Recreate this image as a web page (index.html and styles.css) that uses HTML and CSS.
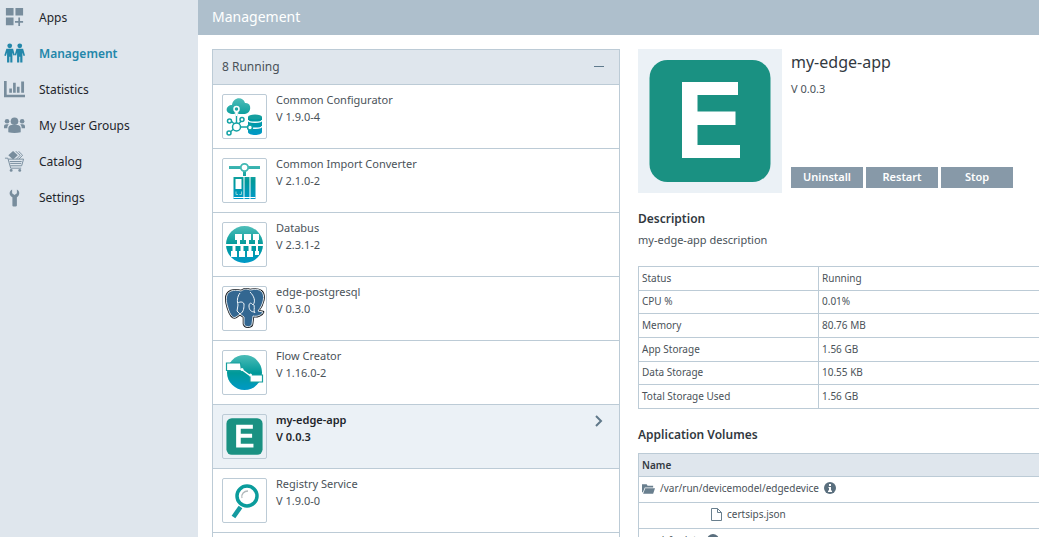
FILE: index.html
```html
<!DOCTYPE html>
<html lang="en">
<head>
<meta charset="utf-8">
<title>Management</title>
<link rel="stylesheet" href="styles.css">
</head>
<body>
<svg class="defs" width="0" height="0" aria-hidden="true">
  <defs>
    <linearGradient id="teal" gradientUnits="userSpaceOnUse" x1="0" y1="0" x2="0" y2="38">
      <stop offset="0" stop-color="#50beb9"/><stop offset=".5" stop-color="#099"/><stop offset="1" stop-color="#0099cb"/>
    </linearGradient>
    <symbol id="edge" viewBox="0 0 144 144">
      <rect x="11.500" y="11" width="121" height="122" rx="18" fill="#1a9182"/>
      <path fill="#fff" d="M44 33h56v13H59.500v16.500h38V76h-38v20H102v13H44z"/>
    </symbol>
  </defs>
</svg>
<div class="app">
  <nav class="sidebar">
    <a class="nav-item" href="#"><svg class="nav-icon" viewBox="0 0 22 22"><path d="M2 1h8v8H2zM12 1h8v8h-8zM2 11h8v8H2zM15 11h1.800v3.600H20v1.800h-3.200V20H15v-3.600h-3.500v-1.800H15z"/></svg>Apps</a>
    <a class="nav-item active" href="#"><svg class="nav-icon" viewBox="0 0 22 22"><circle cx="6" cy="3" r="2.500"/><circle cx="16.500" cy="3" r="2.500"/><path d="M2.500 6h7l1.800 6.500-1.500.5L8.800 10v10.500H6.600v-6H5.600v6H3.200V10L2 13.500.3 13zM13 6h7l2 7-1.500.5L19.300 10v10.500H17v-6h-1v6h-2.300V10l-1 3-1.500-.5z"/></svg>Management</a>
    <a class="nav-item" href="#"><svg class="nav-icon" viewBox="0 0 22 22"><path d="M0 2h2.800v14.500H22V19H0zM5.500 10h2.800v4.500H5.500zM9.500 4h2.800v10.500H9.500zM13.500 8h2.800v6.500h-2.800zM18 2.500h3v12h-3z"/></svg>Statistics</a>
    <a class="nav-item" href="#"><svg class="nav-icon" viewBox="0 0 22 22"><circle cx="11" cy="6.500" r="4"/><circle cx="3.200" cy="6.500" r="2.400"/><circle cx="19" cy="6.500" r="2.400"/><path d="M4.500 18v-4c0-2 1.500-3.500 3.500-3.500h6c2 0 3.500 1.500 3.500 3.500v4c-4 1-9 1-13 0zM0 14v-2c0-1.500 1-2.300 2.500-2.300h2.500C4 11 3.500 12 3.500 14zM22 14v-2c0-1.500-1-2.300-2.500-2.300H17c1 1.300 1.500 2.300 1.500 4.300z"/></svg>My User Groups</a>
    <a class="nav-item" href="#"><svg class="nav-icon" viewBox="0 0 22 22"><path d="M4.500 4.500 9.500 0l5 4.500-5 4.500z"/><path class="line" d="m12 0 5 4.500-4 4M15 0l4.500 4.500-4 4M1 7.500h3l3 10.500h11M4.500 8.500H20.500l-2 7H6.500M6 11h12.500M6.500 13h11.500"/><circle cx="7.500" cy="20.300" r="1.500"/><circle cx="16.500" cy="20.300" r="1.500"/></svg>Catalog</a>
    <a class="nav-item" href="#"><svg class="nav-icon" viewBox="0 0 22 22"><path d="M8.500 2.500v4l2.500 2 2.500-2v-4c3.300 1.500 3.300 6 0 8.300V19c0 1-.7 1.500-2.500 1.500S8.800 20 8.800 19v-8.200c-3.800-2-3.800-6.500-.3-8.300z"/></svg>Settings</a>
  </nav>
  <main class="main">
    <h1 class="title">Management</h1>
    <div class="content">
      <section class="panel">
        <header class="panel-head"><span>8 Running</span><button class="collapse" type="button" aria-label="Collapse"></button></header>
        <ul class="apps">
          <li class="row"><svg class="thumb" viewBox="0 0 43 43"><g transform="translate(3 3)"><path fill="url(#teal)" d="M6 16c-8-1-6-9 0-9C7-1 17-2 19 5c7-1 7 10 0 11z"/><path fill="url(#teal)" d="M22 19v15c0 4 14 4 14 0V19z"/><ellipse cx="29" cy="19" rx="7" ry="2.500" fill="#159f9f"/><path d="M22 22c0 3 14 3 14 0M22 28c0 3 14 3 14 0" fill="none" stroke="#fff" stroke-width="1.300"/><path d="M10.500 12v15M10.500 28 4 22M11 28l5-6M10 29l-7 6M11 29h13" stroke="#fff" stroke-width="3.500"/><path d="M10.500 12v15M10.500 28 4 22M11 28l5-6M10 29l-7 6M11 29h13" stroke="#13a2a5" stroke-width="1.400"/><path d="M10.500 13v5" stroke="#fff" stroke-width="1.500"/><g fill="#fff" stroke="#13a2a5" stroke-width="1.500"><circle cx="10.500" cy="29" r="4"/><circle cx="3.500" cy="23" r="2"/><circle cx="16" cy="21.500" r="2"/><circle cx="3" cy="35" r="2"/><circle cx="24" cy="29.500" r="2.400"/></g><circle cx="10.500" cy="11" r="2.500" fill="#20a5a2" stroke="#fff" stroke-width="1.500"/></g></svg><div class="info"><span>Common Configurator</span><span>V 1.9.0-4</span></div></li>
          <li class="row"><svg class="thumb" viewBox="0 0 43 43"><g transform="translate(3 3)"><path fill="url(#teal)" d="M3 4h12v3H3zM22 4h12v3H22zM17 8h3v6h-3z"/><circle cx="18.500" cy="5.500" r="3.700" fill="#fff" stroke="#43b9b4" stroke-width="1.800"/><path fill="url(#teal)" d="M7.500 15h10v22h-10zM18.500 15h5v22h-5zM24.500 15h5v22h-5z"/><path d="M9.500 17h6v10h-6zM7.500 35h22v1h-22z" fill="#fff"/><path d="M10 29.500v3h2M15.500 29.500v3h-2" stroke="#8dd4d5" fill="none"/></g></svg><div class="info"><span>Common Import Converter</span><span>V 2.1.0-2</span></div></li>
          <li class="row"><svg class="thumb" viewBox="0 0 43 43"><g transform="translate(3 3)"><circle cx="18.500" cy="18.500" r="18.500" fill="url(#teal)"/><path stroke="#fff" stroke-width="2" d="M0 19h37"/><g fill="#fff"><path d="M9 8h7v6h-2v5h-3v-5H9zM18 8h7v6h-2v5h-3v-5h-2zM27 8h6v6h-1v5h-3v-5h-2zM5 31h6v-6H9.500v-6h-3v6H5zM13 31h6v-6h-1.500v-6h-3v6H13zM21 31h6v-6h-1.500v-6h-3v6H21zM29 29h4v-4h-1v-6h-2v6h-1z"/></g></g></svg><div class="info"><span>Databus</span><span>V 2.3.1-2</span></div></li>
          <li class="row"><svg class="thumb" viewBox="0 0 43 43"><g transform="translate(3 3)" stroke-linejoin="round"><path d="M5 1C0 3-1 9 2 18c2 7 5 11 8 9l4-3 4 3v7c1 4 8 3 8 0l1-8c4 1 9-1 10-4l-5-1c5-6 8-16 3-20-4-3-9-1-11-1-5-2-7 0-9 1C11 0 8 0 5 1z" fill="#336791" stroke="#161b20" stroke-width="2.600"/><path d="M5 1C0 3-1 9 2 18c2 7 5 11 8 9l4-3 4 3v7c1 4 8 3 8 0l1-8c4 1 9-1 10-4l-5-1c5-6 8-16 3-20-4-3-9-1-11-1-5-2-7 0-9 1C11 0 8 0 5 1z" fill="#336791" stroke="#f4f8fa" stroke-width=".9"/><path d="M14 3c-3 4-3 8-2 12l-1 6 3 3c4-2 4-7 4-10-1-3-5-2-6-1M24 2c4 4 6 9 3 13-2-3-4-2-4 1 0 4 2 6 6 6M28 15c1 4-1 6 1 8" fill="none" stroke="#f1f6fa"/></g></svg><div class="info"><span>edge-postgresql</span><span>V 0.3.0</span></div></li>
          <li class="row"><svg class="thumb" viewBox="0 0 43 43"><g transform="translate(3 3)"><circle cx="18.500" cy="18.500" r="17.500" fill="url(#teal)"/><path d="M15 15l11 8" stroke="#fff" stroke-width="1.500"/><path d="M.5 9h14l1 7.500H.5zM24 21h12.500v7H24z" fill="#fff" stroke="#169f9e" stroke-width="1.200"/><circle cx="16" cy="15.500" r="1.500" fill="#fff"/><circle cx="24.500" cy="21" r="1.500" fill="#fff"/></g></svg><div class="info"><span>Flow Creator</span><span>V 1.16.0-2</span></div></li>
          <li class="row selected"><svg class="thumb"><use href="#edge"/></svg><div class="info"><span>my-edge-app</span><span>V 0.0.3</span></div><svg class="chevron" viewBox="0 0 8 12"><path d="m1 1 5 5-5 5"/></svg></li>
          <li class="row"><svg class="thumb" viewBox="0 0 43 43"><path d="m17.500 28-7 10" stroke="#149aa0" stroke-width="4.500"/><circle cx="24" cy="17" r="10" fill="#fff" stroke="#0b9c9c" stroke-width="3.500"/><path d="M19 19c-1-4 2-7 6-7" fill="none" stroke="#b1b9bb" stroke-width="1.300"/></svg><div class="info"><span>Registry Service</span><span>V 1.9.0-0</span></div></li>
          <li class="row"></li>
        </ul>
      </section>
      <section class="detail">
        <div class="summary">
          <svg class="hero" role="img" aria-label="my-edge-app"><use href="#edge"/></svg>
          <div class="summary-text"><h2 class="name">my-edge-app</h2><p class="version">V 0.0.3</p>
            <div class="actions"><button class="btn" type="button">Uninstall</button><button class="btn" type="button">Restart</button><button class="btn" type="button">Stop</button></div></div>
        </div>
        <h3 class="heading">Description</h3>
        <p class="description">my-edge-app description</p>
        <table class="stats">
          <tr><th scope="row">Status</th><td>Running</td></tr>
          <tr><th scope="row">CPU %</th><td>0.01%</td></tr>
          <tr><th scope="row">Memory</th><td>80.76 MB</td></tr>
          <tr><th scope="row">App Storage</th><td>1.56 GB</td></tr>
          <tr><th scope="row">Data Storage</th><td>10.55 KB</td></tr>
          <tr><th scope="row">Total Storage Used</th><td>1.56 GB</td></tr>
        </table>
        <h3 class="heading">Application Volumes</h3>
        <table class="volumes">
          <thead><tr><th scope="col">Name</th></tr></thead>
          <tbody>
            <tr><td><div class="cell"><svg class="folder" viewBox="0 0 14 10"><path d="M0 0h5l1 1.500h6V3.500H3L1 8.500H0zM3.500 4.300H14L12 10H1.200z"/></svg><span>/var/run/devicemodel/edgedevice</span><svg class="tip" viewBox="0 0 12 12"><circle cx="6" cy="6" r="6"/><path d="M5 2h2v2H5zM4.500 5H7v3.500h1V10H4V8.500h1V6h-.5z" fill="#fff"/></svg></div></td></tr>
            <tr><td><div class="cell file"><svg class="doc" viewBox="0 0 11 13"><path d="M.5.500h6l4 4v8H.5zM6.500.500v4h4"/></svg><span>certsips.json</span></div></td></tr>
            <tr><td><div class="cell closed"><span>/cfg-data</span><svg class="tip" viewBox="0 0 12 12"><circle cx="6" cy="6" r="6"/></svg></div></td></tr>
          </tbody>
        </table>
      </section>
    </div>
  </main>
</div>
</body>
</html>
```
FILE: styles.css
```css
* { box-sizing: border-box; }
body { margin: 0; background: #fff; color: #4a5259; font: 11px/17px "Noto Sans", sans-serif; }
h1, h2, h3, p, ul { margin: 0; padding: 0; }
.defs { position: absolute; }
.app { display: grid; grid-template-columns: 198px 1fr; height: 100vh; overflow: hidden; }
.sidebar { background: #dfe6ed; }
.nav-item { display: flex; align-items: center; gap: 14px; height: 36px; padding: 0 0 2px 4px; color: #1e252b; font-size: 12px; text-decoration: none; }
.nav-icon { width: 21px; height: 21px; fill: #788d9d; }
.nav-icon .line { fill: none; stroke: #788d9d; }
.active { color: #2387aa; font-weight: 600; }
.active .nav-icon { fill: #2387aa; }
.main { min-width: 0; }
.title { height: 35px; padding-left: 14px; background: #aebfcc; color: #fff; font-size: 14px; font-weight: 400; line-height: 34px; }
.content { display: grid; grid-template-columns: 408px 1fr; gap: 18px; padding: 14px 0 0 14px; }
.panel { border: 1px solid #bccbd6; }
.panel-head { display: flex; align-items: center; justify-content: space-between; height: 34px; padding: 0 15px 2px 9px; background: #dfe6ed; font-size: 12px; }
.collapse { width: 10px; height: 1px; padding: 0; border: 0; background: #5f7a8d; }
.apps { list-style: none; }
.row { display: flex; height: 64px; padding: 9px 16px 9px 9px; border-top: 1px solid #bccbd6; gap: 9px; }
.selected { background: #ebf1f6; color: #1e252b; font-weight: 600; }
.thumb { flex: none; width: 45px; height: 45px; border: 1px solid #bccbd6; border-radius: 2px; }
.info { display: flex; flex: 1; flex-direction: column; margin-top: -3px; }
.chevron { width: 8px; height: 12px; margin-top: 1px; fill: none; stroke: #60798a; stroke-width: 2; }
.detail { min-width: 0; }
.summary { display: flex; gap: 9px; }
.hero { flex: none; width: 144px; height: 144px; background: #ebf1f6; }
.summary-text { display: flex; flex-direction: column; height: 139px; }
.name { color: #32393f; font-size: 16px; font-weight: 400; line-height: 26px; }
.version { margin-top: 5px; }
.actions { display: flex; gap: 3px; margin-top: auto; }
.btn { width: 72px; height: 21px; padding: 0 0 1px; border: 0; background: #8799a8; color: #fff; font: 600 11px/20px "Noto Sans", sans-serif; }
.heading { margin-top: 17px; color: #32393f; font-size: 12px; font-weight: 600; line-height: 18px; }
.description { margin-top: 3px; }
table { width: 100%; border-collapse: collapse; font-size: 10px; line-height: 16px; }
.stats { height: 143px; margin-top: 18px; }
th, td { padding: 2px 3px 3px; border: 1px solid #bccbd6; text-align: left; font-weight: 400; }
th:last-child, td:last-child { border-right: 0; }
.stats th { width: 180px; }
.volumes { margin-top: 9px; }
.volumes th { height: 23px; background: #dfe6ed; color: #32393f; font-weight: 600; }
.volumes td { height: 26px; padding: 3px 3px 6px; vertical-align: top; }
.cell { display: flex; align-items: center; gap: 5px; }
.folder { width: 13px; height: 10px; margin-top: 2px; fill: #697f8e; }
.tip { width: 12px; height: 12px; fill: #5a6f7e; }
.file { padding-left: 69px; }
.doc { width: 11px; height: 13px; fill: none; stroke: #697f8e; }
.closed { padding-left: 18px; }
```
